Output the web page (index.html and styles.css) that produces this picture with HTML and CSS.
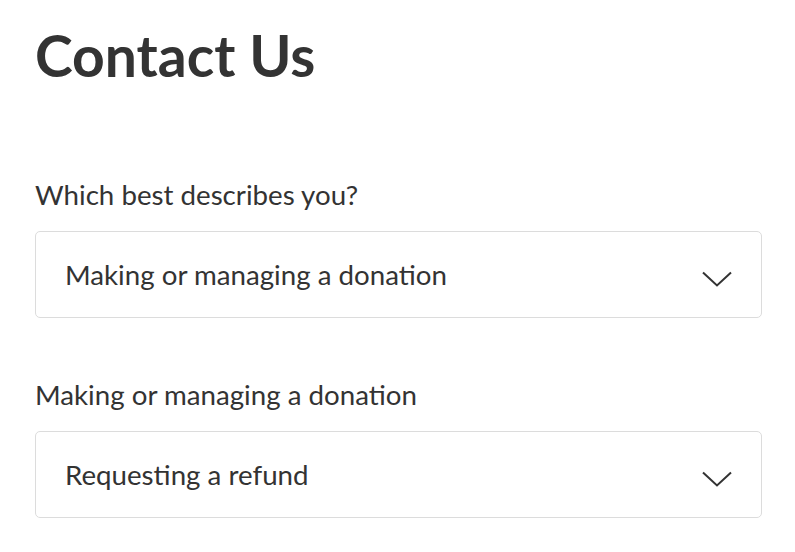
FILE: index.html
```html
<!DOCTYPE html>
<html lang="en">
<head>
<meta charset="utf-8">
<title>Contact Us</title>
<link rel="stylesheet" href="styles.css">
</head>
<body>
<main class="page">
  <h1 class="title">Contact Us</h1>
  <div class="field">
    <label class="label">Which best describes you?</label>
    <div class="select">
      <span class="select-text">Making or managing a donation</span>
      <svg class="chevron" width="30" height="16" viewBox="0 0 30 16" aria-hidden="true"><path d="M1 1.5 L15 14.5 L29 1.5" fill="none" stroke="#333" stroke-width="2"/></svg>
    </div>
  </div>
  <div class="field">
    <label class="label">Making or managing a donation</label>
    <div class="select">
      <span class="select-text">Requesting a refund</span>
      <svg class="chevron" width="30" height="16" viewBox="0 0 30 16" aria-hidden="true"><path d="M1 1.5 L15 14.5 L29 1.5" fill="none" stroke="#333" stroke-width="2"/></svg>
    </div>
  </div>
</main>
</body>
</html>
```
FILE: styles.css
```css
html, body {
  margin: 0;
  padding: 0;
  background: #fff;
}
body {
  font-family: Lato, "Open Sans", sans-serif;
  color: #333;
}
.page {
  width: 727px;
  padding: 24px 0 0 35px;
}
.title {
  margin: 0;
  font-size: 57px;
  line-height: 62px;
  font-weight: 700;
  color: #333;
}
.field {
  display: flex;
  flex-direction: column;
  gap: 19px;
}
.field:first-of-type {
  margin-top: 92px;
}
.field + .field {
  margin-top: 60px;
}
.label {
  font-size: 27.7px;
  line-height: 34px;
}
.select {
  height: 87px;
  box-sizing: border-box;
  border: 1px solid #dcdcdc;
  border-radius: 5px;
  padding: 0 29px 0 29px;
  display: flex;
  align-items: center;
  justify-content: space-between;
}
.select-text {
  font-size: 27.7px;
  line-height: 34px;
  margin-top: 1px;
}
.chevron {
  margin-top: 9px;
}
```
